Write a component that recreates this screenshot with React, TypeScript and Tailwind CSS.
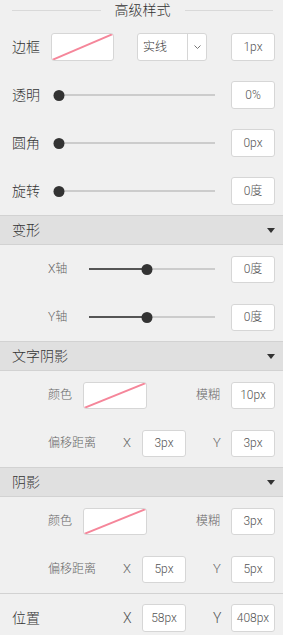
import React from "react";

const font = { fontFamily: "Roboto, 'Noto Sans CJK SC', sans-serif" };

function Swatch({ w = "w-[63px]", h = "h-[28px]" }: { w?: string; h?: string }) {
  return (
    <div className={`relative ${w} ${h} bg-white border border-[#d6d6d6] rounded-[3px] overflow-hidden`}>
      <svg className="absolute inset-0 w-full h-full" preserveAspectRatio="none" viewBox="0 0 100 100">
        <line x1="0" y1="100" x2="100" y2="0" stroke="#f5869a" strokeWidth="2" vectorEffect="non-scaling-stroke" />
      </svg>
    </div>
  );
}

function Input({ v, h = "h-[27px]" }: { v: string; h?: string }) {
  return (
    <div className={`w-[44px] ${h} bg-white border border-[#d6d6d6] rounded-[3px] flex items-center justify-center text-[12px] text-[#555] font-light shrink-0`}>
      {v}
    </div>
  );
}

function Slider({ width, pct, dark }: { width: string; pct: number; dark?: boolean }) {
  return (
    <div className={`relative ${width} h-[11px] flex items-center`}>
      <div className="w-full h-[2px] bg-[#cccccc]" />
      {dark && <div className="absolute left-0 h-[2px] bg-[#555555]" style={{ width: `${pct}%` }} />}
      <div
        className="absolute w-[11px] h-[11px] rounded-full bg-[#333333] -translate-x-1/2"
        style={{ left: `${pct}%` }}
      />
    </div>
  );
}

function SectionHeader({ title }: { title: string }) {
  return (
    <div className="h-[30px] bg-[#e0e0e0] border-y border-[#d2d2d2] flex items-center justify-between pl-3 pr-[8px]">
      <span className="text-[14px] text-[#333] font-light">{title}</span>
      <svg width="8" height="5" viewBox="0 0 8 5">
        <polygon points="0,0 8,0 4,5" fill="#333" />
      </svg>
    </div>
  );
}

function ColorRow({ blur }: { blur: string }) {
  return (
    <div className="h-12 flex items-center pl-[48px] pr-[8px]">
      <span className="w-[35px] text-[12px] text-[#666] font-light">颜色</span>
      <Swatch w="w-[64px]" h="h-[27px]" />
      <span className="ml-[49px] w-[35px] text-[12px] text-[#666] font-light">模糊</span>
      <Input v={blur} />
    </div>
  );
}

function OffsetRow({ x, y }: { x: string; y: string }) {
  return (
    <div className="h-12 flex items-center pl-[48px] pr-[8px]">
      <span className="w-[75px] text-[12px] text-[#666] font-light">偏移距离</span>
      <span className="w-[19px] text-[13px] text-[#666] font-light">X</span>
      <Input v={x} />
      <span className="ml-[27px] w-[18px] text-[13px] text-[#666] font-light">Y</span>
      <Input v={y} />
    </div>
  );
}

export default function App() {
  return (
    <div className="w-[283px] h-[635px] overflow-hidden bg-[#f0f0f0] text-[#333] font-light" style={font}>
      {/* Title */}
      <div className="h-[23px] flex items-start">
        <div className="h-5 w-full flex items-center px-3">
          <div className="flex-1 h-px bg-[#d9d9d9]" />
          <span className="mx-[14px] text-[14px] text-[#333]">高级样式</span>
          <div className="flex-1 h-px bg-[#d9d9d9] mr-[-2px]" />
        </div>
      </div>

      {/* 边框 */}
      <div className="h-12 flex items-center pl-3 pr-[8px]">
        <span className="w-[39px] text-[14px]">边框</span>
        <Swatch w="w-[63px]" h="h-[28px]" />
        <div className="ml-[23px] w-[70px] h-[28px] bg-white border border-[#d6d6d6] rounded-[3px] flex">
          <div className="flex-1 flex items-center pl-[5px] text-[12px] text-[#333]">实线</div>
          <div className="w-[19px] border-l border-[#d6d6d6] flex items-center justify-center">
            <svg width="7" height="4" viewBox="0 0 7 4">
              <polyline points="0.5,0.5 3.5,3.5 6.5,0.5" fill="none" stroke="#666" strokeWidth="0.9" />
            </svg>
          </div>
        </div>
        <div className="flex-1" />
        <Input v="1px" h="h-[28px]" />
      </div>

      {[
        ["透明", "0%"],
        ["圆角", "0px"],
        ["旋转", "0度"],
      ].map(([l, v]) => (
        <div key={l} className="h-12 flex items-center pl-3 pr-[8px]">
          <span className="w-[42px] text-[14px]">{l}</span>
          <Slider width="w-[161px]" pct={3.4} />
          <div className="flex-1" />
          <Input v={v} h="h-[28px]" />
        </div>
      ))}

      <SectionHeader title="变形" />
      {["X轴", "Y轴"].map((l) => (
        <div key={l} className="h-12 flex items-center pl-[48px] pr-[8px]">
          <span className="w-[41px] text-[12px] text-[#666]">{l}</span>
          <Slider width="w-[126px]" pct={46} dark />
          <div className="flex-1" />
          <Input v="0度" />
        </div>
      ))}

      <SectionHeader title="文字阴影" />
      <ColorRow blur="10px" />
      <OffsetRow x="3px" y="3px" />

      <SectionHeader title="阴影" />
      <ColorRow blur="3px" />
      <OffsetRow x="5px" y="5px" />

      <div className="h-px bg-[#d2d2d2]" />
      <div className="h-12 flex items-center pl-3 pr-[8px]">
        <span className="w-[111px] text-[14px]">位置</span>
        <span className="w-[19px] text-[14px] text-[#555]">X</span>
        <Input v="58px" h="h-[28px]" />
        <span className="ml-[27px] w-[18px] text-[14px] text-[#555]">Y</span>
        <Input v="408px" h="h-[28px]" />
      </div>
    </div>
  );
}
